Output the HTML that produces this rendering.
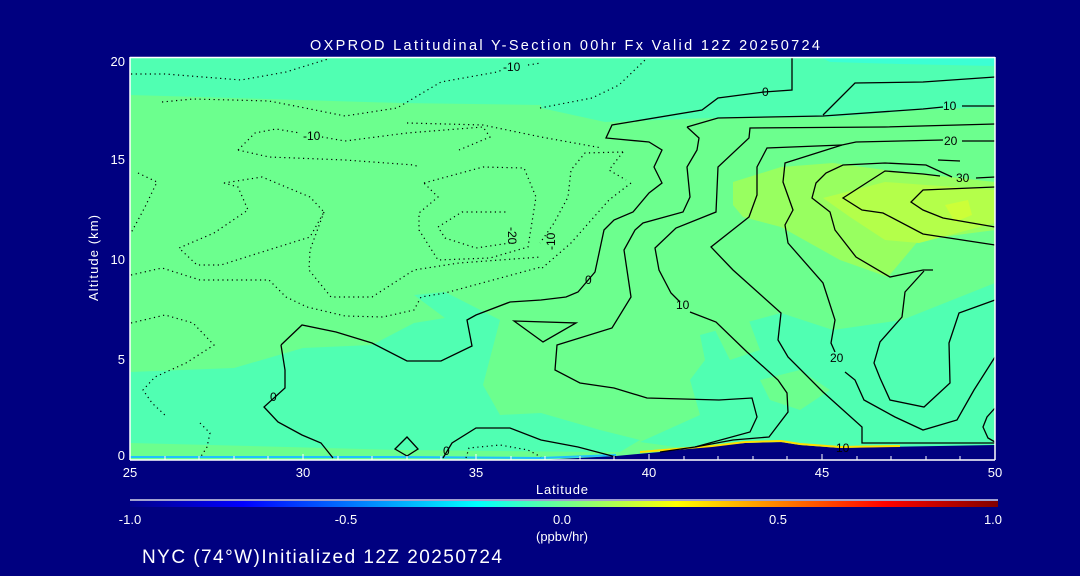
<!DOCTYPE html>
<html><head><meta charset="utf-8"><style>
html,body{margin:0;padding:0;background:#000080;}
svg{display:block;}
text{font-family:"Liberation Sans",sans-serif;fill:#fff;}
</style></head><body>
<svg width="1080" height="576" viewBox="0 0 1080 576" xmlns="http://www.w3.org/2000/svg">
<defs>
<linearGradient id="jet" x1="0" x2="1" y1="0" y2="0">
<stop offset="0" stop-color="#00008b"/>
<stop offset="0.13" stop-color="#0000ff"/>
<stop offset="0.40" stop-color="#00ffff"/>
<stop offset="0.5" stop-color="#70ff90"/>
<stop offset="0.63" stop-color="#ffff00"/>
<stop offset="0.87" stop-color="#ff0000"/>
<stop offset="1" stop-color="#800000"/>
</linearGradient>
</defs>
<rect width="1080" height="576" fill="#000080"/>
<rect x="130" y="57" width="865" height="403" fill="#6cff8e"/>
<polygon fill="#50ffb2" points="130,57 995,57 995,107 919,110 833,117 712,118 605,122 541,108 541,105 400,103 300,100 200,97 130,95"/>
<polygon fill="#3cffd4" points="820,57 995,57 995,66 900,64 830,62"/>
<polygon fill="#98ff60" points="733,182 781,167 833,163 885,170 995,182 995,230 919,240 888,277 840,260 781,227 743,217 733,205"/>
<polygon fill="#b4ff4a" points="823,198 885,182 954,187 995,190 995,223 919,243 885,240 850,217"/>
<polygon fill="#ccff38" points="945,205 968,200 972,215 955,222"/>
<polygon fill="#50ffb2" points="130,372 234,368 303,348 372,345 414,323 445,318 414,295 445,292 500,320 483,385 500,415 541,413 600,430 640,440 620,452 130,452"/>
<polygon fill="#6cff8e" points="130,443 250,446 400,450 600,452 130,452"/>
<polygon fill="#50ffb2" points="700,335 781,313 833,330 902,320 995,283 995,446 840,448 781,443 712,452 640,442 700,415 690,380 705,360"/>
<polygon fill="#6cff8e" points="760,380 800,370 830,390 800,410 770,400"/>
<polygon fill="#6cff8e" points="710,320 745,310 760,350 730,360"/>
<polygon fill="#000080" points="540,460 616,456 660,452 712,446 745,443 781,442 800,445 840,448 880,447 995,445 995,460"/>
<polyline fill="none" stroke="#ffe000" stroke-width="2" points="640,452 712,446 745,442 781,441 800,444 840,447 900,446"/>
<polyline fill="none" stroke="#20c0ff" stroke-width="2" points="130,457 400,457 540,458 616,455"/>
<g fill="none" stroke="#000" stroke-width="1.3">
<polyline points="281,345 302,325 336,332 372,343 407,361 441,361 472,346 467,320 476,315 510,302 541,300 566,297 578,292 595,272 604,230 614,220 633,212 649,193 662,183 654,167 662,150 649,142 606,138 612,125 702,110 718,98 764,92 792,90 792,58"/>
<polyline points="281,345 285,370 285,388 264,407 278,422 302,435 321,443 333,458"/>
<polygon points="395,449 407,437 418,449 407,456"/>
<polyline points="443,458 452,443 476,428 510,428 541,440 578,447 616,457"/>
<polygon points="514,321 576,323 543,342"/>
<polyline points="823,115 855,83 923,82 995,77"/>
<polyline points="687,127 718,118 823,116 923,109 943,107"/>
<polyline points="962,106 995,106"/>
<polyline points="687,127 699,138 697,150 687,167 690,197 683,212 643,223 635,230 624,250 631,297 612,328 557,345 555,370 580,383 614,388 647,398 719,400 752,398 757,417 750,432 695,447 660,452"/>
<polyline points="995,124 885,127 750,128 749,138 718,167 716,212 676,228 655,248 659,270 671,293 680,302"/>
<polyline points="690,312 716,322 747,352 778,380 787,393 788,412 769,437 733,440 695,447"/>
<polyline points="995,141 962,141"/><polyline points="943,140 856,142 842,145 785,163 783,182 793,210 785,225 788,243 823,283 835,320 831,343 835,352"/>
<polyline points="845,372 855,380 864,400 895,417 923,430 957,420 974,390 995,357"/>
<polyline points="842,145 767,148 757,167 757,195 749,217 711,247 733,270 781,313 778,340 788,357 823,392 862,427 862,443 995,443"/>
<polyline points="995,177 976,178"/><polyline points="952,177 926,165 885,163 843,165 826,173 816,183 812,198 830,212 835,230 856,257 890,277 923,270 933,270"/>
<polyline points="995,187 923,190 911,202 923,210 943,218 995,227"/>
<polyline points="995,245 923,234 883,213 862,210 843,198 885,171 923,174 940,176"/>
<polyline points="995,300 959,313 949,343 950,383 924,407 890,400 880,378 874,363 880,342 902,317 905,292 924,271"/>
<polyline points="995,408 987,417 983,427 988,438 995,442"/>
<polyline points="938,160 960,161"/>
</g>
<g fill="none" stroke="#000" stroke-width="1.2" stroke-dasharray="1.2 3.5">
<polyline points="131,74 165,74 241,80 286,72 328,59"/>
<polyline points="162,102 193,99 269,101 300,107 345,116 397,108 441,82 497,72 502,70"/>
<polyline points="528,65 541,63"/>
<polyline points="540,108 592,98 619,85 645,60"/>
<polyline points="238,150 255,133 276,129 300,133"/><polyline points="322,137 345,141 407,133 483,127 490,137 459,150"/>
<polyline points="238,150 269,157 345,160 414,165 419,167"/>
<polyline points="407,123 483,125 541,137 602,148"/>
<polyline points="138,173 157,182 145,207 131,233"/>
<polygon points="224,183 262,177 310,197 324,212 310,237 262,252 221,265 197,265 179,248 214,233 248,210 238,187"/>
<polyline points="131,275 162,268 200,280 269,280 286,297 307,307 345,316 383,317 414,310 421,297 445,293 541,267"/>
<polyline points="424,183 483,167 524,168 536,197 528,247 490,258 438,260 419,230 419,213 438,197 424,183"/>
<polyline points="438,227 462,212 506,212"/><polyline points="510,243 476,248 445,238 438,227"/>
<polyline points="324,212 310,250 309,270 331,297 372,297 414,270 459,263 541,257"/>
<polyline points="131,323 165,315 193,323 214,345 186,363 155,377 143,390 152,403 167,417"/>
<polyline points="200,423 210,433 207,447 200,458"/>
<polyline points="466,458 469,448 500,445 528,450 541,457"/>
<polyline points="623,152 585,153 571,170 568,197 554,223 540,243"/>
<polyline points="631,183 609,200 571,243 540,270"/>
<polyline points="623,152 609,170 626,180"/>
</g>
<g font-size="12">
<text x="503" y="71" style="fill:#000">-10</text>
<text x="303" y="140" style="fill:#000">-10</text>
<text x="762" y="96" style="fill:#000">0</text>
<text x="943" y="110" style="fill:#000">10</text>
<text x="944" y="145" style="fill:#000">20</text>
<text x="956" y="182" style="fill:#000">30</text>
<text x="585" y="284" style="fill:#000">0</text>
<text x="676" y="309" style="fill:#000">10</text>
<text x="830" y="362" style="fill:#000">20</text>
<text x="836" y="452" style="fill:#000">10</text>
<text x="270" y="401" style="fill:#000">0</text>
<text x="443" y="455" style="fill:#000">0</text>
<text x="508" y="237" style="fill:#000" transform="rotate(90 513 232)">-20</text>
<text x="545" y="250" style="fill:#000" transform="rotate(-90 550 245)">-10</text>
</g>
<g stroke="#fff" stroke-width="1.5" fill="none">
<line x1="130" y1="57.5" x2="995" y2="57.5"/>
<line x1="995" y1="57" x2="995" y2="460"/>
<line x1="130" y1="460" x2="995" y2="460"/>
<line x1="130" y1="57" x2="130" y2="460"/>
</g>
<g stroke="#fff" stroke-width="1">
<line x1="130" y1="460" x2="130" y2="455"/><line x1="165" y1="460" x2="165" y2="456"/><line x1="199" y1="460" x2="199" y2="456"/><line x1="234" y1="460" x2="234" y2="456"/><line x1="268" y1="460" x2="268" y2="456"/><line x1="303" y1="460" x2="303" y2="454"/><line x1="338" y1="460" x2="338" y2="456"/><line x1="372" y1="460" x2="372" y2="456"/><line x1="407" y1="460" x2="407" y2="456"/><line x1="441" y1="460" x2="441" y2="456"/><line x1="476" y1="460" x2="476" y2="454"/><line x1="511" y1="460" x2="511" y2="456"/><line x1="545" y1="460" x2="545" y2="456"/><line x1="580" y1="460" x2="580" y2="456"/><line x1="614" y1="460" x2="614" y2="456"/><line x1="649" y1="460" x2="649" y2="454"/><line x1="684" y1="460" x2="684" y2="456"/><line x1="718" y1="460" x2="718" y2="456"/><line x1="753" y1="460" x2="753" y2="456"/><line x1="787" y1="460" x2="787" y2="456"/><line x1="822" y1="460" x2="822" y2="454"/><line x1="857" y1="460" x2="857" y2="456"/><line x1="891" y1="460" x2="891" y2="456"/><line x1="926" y1="460" x2="926" y2="456"/><line x1="960" y1="460" x2="960" y2="456"/>
</g>
<g font-size="13" text-anchor="middle">
<text x="565" y="50" font-size="14.5" textLength="510" lengthAdjust="spacing">OXPROD Latitudinal Y-Section 00hr  Fx Valid 12Z 20250724</text>
<text x="130" y="477">25</text><text x="303" y="477">30</text><text x="476" y="477">35</text><text x="649" y="477">40</text><text x="822" y="477">45</text><text x="995" y="477">50</text>
<text x="562" y="494" textLength="52" lengthAdjust="spacing">Latitude</text>
<text x="130" y="524">-1.0</text><text x="346" y="524">-0.5</text><text x="562" y="524">0.0</text><text x="778" y="524">0.5</text><text x="993" y="524">1.0</text>
<text x="562" y="541">(ppbv/hr)</text>
</g>
<g font-size="13" text-anchor="end">
<text x="125" y="66">20</text><text x="125" y="164">15</text><text x="125" y="264">10</text><text x="125" y="364">5</text><text x="125" y="460">0</text>
</g>
<text x="98" y="258" font-size="13" text-anchor="middle" textLength="86" lengthAdjust="spacing" transform="rotate(-90 98 258)">Altitude (km)</text>
<line x1="130" y1="500" x2="998" y2="500" stroke="#fff" stroke-width="1.2"/>
<rect x="130" y="501" width="868" height="6" fill="url(#jet)"/>
<text x="142" y="563" font-size="19" textLength="360" lengthAdjust="spacing">NYC (74°W)Initialized 12Z 20250724</text>
</svg>
</body></html>
